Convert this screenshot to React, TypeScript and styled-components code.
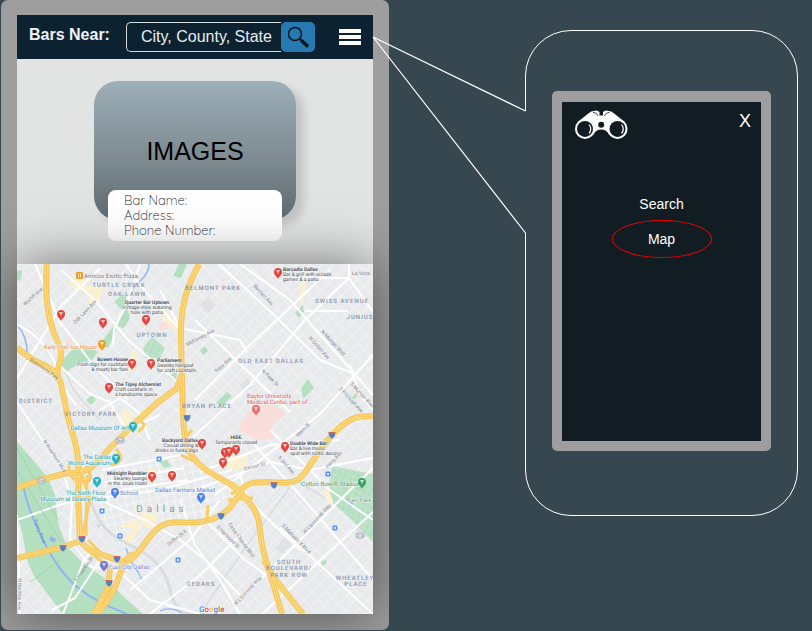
import React from "react";
import styled, { createGlobalStyle } from "styled-components";

const GlobalStyle = createGlobalStyle`
  * { box-sizing: border-box; }
  body {
    margin: 0;
    background: #37474f;
    font-family: "Liberation Sans", Arial, sans-serif;
  }
`;

const Page = styled.main`
  display: grid;
  grid-template-columns: 388fr 136fr 273fr;
  align-items: start;
  padding: 0 14px 0 1px;
`;

/* ---------- main phone ---------- */

const Phone = styled.section`
  display: flex;
  flex-direction: column;
  padding: 15px 16px 16px;
  border-radius: 7px;
  background: #9e9e9e;
  overflow: hidden;
`;

const TopBar = styled.header`
  display: flex;
  align-items: center;
  height: 44px;
  padding: 0 12px;
  background: #0c2231;
`;

const Title = styled.label`
  margin-right: 16px;
  padding-bottom: 4px;
  color: #f1f3f4;
  font-size: 16px;
  font-weight: 700;
  white-space: nowrap;
`;

const SearchBox = styled.form`
  display: flex;
  flex: 1;
  min-width: 0;
  height: 30px;
  margin-right: 24px;
`;

const SearchInput = styled.input`
  flex: 1;
  min-width: 0;
  padding: 0 0 0 14px;
  border: 1px solid #d6dbde;
  border-right: 0;
  border-radius: 5px 0 0 5px;
  background: transparent;
  color: #e8ecee;
  font: 16px "Liberation Sans", Arial, sans-serif;
  outline: 0;
`;

const SearchButton = styled.button`
  display: grid;
  place-items: center;
  width: 34px;
  padding: 0;
  border: 0;
  border-radius: 5px;
  background: #2779b1;
`;

const MenuButton = styled.button`
  display: flex;
  flex-direction: column;
  gap: 2px;
  width: 22px;
  padding: 0;
  border: 0;
  background: transparent;
`;

const Bar = styled.span`
  width: 100%;
  height: 4px;
  background: #fff;
`;

const Body = styled.div`
  display: flex;
  flex-direction: column;
  align-items: center;
  padding: 22px 0 23px;
  background: #e1e4e3;
`;

const Photo = styled.div`
  width: 202px;
  height: 139px;
  padding-top: 55px;
  border-radius: 24px;
  background: linear-gradient(#9dafb8, #7b888e 60%, #5f6a6f);
  box-shadow: 8px 6px 10px rgba(0, 0, 0, 0.14);
  color: #000;
  font-size: 25px;
  line-height: 30px;
  text-align: center;
`;

const Info = styled.div`
  width: 174px;
  margin-top: -30px;
  padding: 3px 16px;
  border-radius: 8px;
  background: #fff;
  color: #20242b;
  font-family: Quicksand, Lato, sans-serif;
  font-size: 13px;
  font-weight: 300;
  line-height: 15px;
`;

const MapPanel = styled.div`
  position: relative;
  line-height: 0;
  box-shadow: 0 0 50px rgba(0, 0, 0, 0.5);
`;

const MapSvg = styled.svg`
  display: block;
  width: 100%;
  height: auto;
  font-family: Roboto, sans-serif;
  text-rendering: geometricPrecision;
`;

/* ---------- callout ---------- */

const Callout = styled.aside`
  position: relative;
  grid-column: 3;
  margin-top: 30px;
  padding: 60px 26px 64px;
  border: 1px solid #fff;
  border-radius: 46px;
`;

const Tail = styled.svg`
  position: absolute;
  top: 5px;
  right: 100%;
  width: 154px;
  height: 200px;
`;

const MiniPhone = styled.div`
  padding: 11px 10px 10px;
  border-radius: 5px;
  background: #9e9e9e;
`;

const MiniScreen = styled.div`
  min-height: 339px;
  background: #111d23;
`;

const MiniTop = styled.div`
  display: flex;
  justify-content: space-between;
  align-items: flex-start;
  padding: 8px 10px 0 13px;
`;

const CloseButton = styled.button`
  padding: 0;
  border: 0;
  background: transparent;
  color: #fff;
  font: 18px/22px "Liberation Sans", Arial, sans-serif;
`;

const Menu = styled.nav`
  display: flex;
  flex-direction: column;
  align-items: center;
  margin-top: 51px;
`;

const MenuLink = styled.a<{ $active?: boolean }>`
  width: 100px;
  border: ${(p) => (p.$active ? "1px solid #f00000" : "0")};
  border-radius: 50%;
  color: #fff;
  font-size: 14px;
  line-height: ${(p) => (p.$active ? "36px" : "26px")};
  text-align: center;
  text-decoration: none;
  margin-bottom: 3px;
`;

/* ---------- icons ---------- */

const Magnifier = () => (
  <svg width="22" height="22" viewBox="0 0 22 22">
    <circle cx="8" cy="8" r="6.500" fill="none" stroke="#0b161d" strokeWidth="1.500" />
    <path d="M12.800 12.800 15 15" stroke="#0b161d" strokeWidth="2" />
    <path d="M15 15 20 19.600" stroke="#0b161d" strokeWidth="3.500" strokeLinecap="round" />
  </svg>
);

const Binoculars = () => (
  <svg width="53" height="30" viewBox="0 0 53 30">
    <g fill="#fff">
      <circle cx="10" cy="18.900" r="10" />
      <circle cx="42.500" cy="18.900" r="10" />
      <path d="M3 11.800 14 3Q16 1 19 1Q22-.5 24.500 2V5.500H28V2Q30.500-.5 33.500 1Q36.500 1 38.500 3L49.500 11.800 42 26 34 24.500Q31.500 19.500 26.200 19.500T18.500 24.500L10 26Z" />
    </g>
    <path d="M18 2.300Q22 2.500 23.200 6M34.500 2.300Q30.500 2.500 29.300 6" fill="none" stroke="#111d23" strokeWidth=".8" />
    <circle cx="26.200" cy="14.800" r="3" fill="#111d23" />
    <circle cx="10" cy="18.900" r="8" fill="#111d23" />
    <circle cx="42.500" cy="18.900" r="8" fill="#111d23" />
    <path d="M14 14.500Q17.500 19 14 23.500M46.500 14.500Q50 19 46.500 23.500" fill="none" stroke="#fff" strokeWidth="1.200" />
  </svg>
);

/* ---------- map ---------- */

const GREENS = [
  "M17 442L33 460L48 478L55 495L58 523L67 547L83 563L107 580L127 600L143 614H63L46 592L34 576L27 560L22 532L17 515Z",
  "M114 302L124 293L130 306L122 310Z",
  "M127 306L130 318L124 328L114 326L122 316Z",
  "M118 326L108 348L100 344L112 328Z",
  "M143 348L152 337L165 348L160 358L146 358Z",
  "M58 364L72 350L88 346L98 352L92 360L78 364L66 372Z",
  "M179 264H187L181 278L173 276Z",
  "M17 271L22 270L21 279L17 281Z",
  "M295 313L303 305L304 312L299 318Z",
  "M200 350L205 346L208 351L203 355Z",
  "M86 400L92 395L96 400L91 405Z",
  "M168 377L177 370L176 381Z",
  "M216 403L227 392L232 396L222 406Z",
  "M301 388L308 379L314 388L303 399Z",
  "M352 397L358 392L357 397L353 400Z",
  "M332 466L373 474V542L352 520L334 504L329 490Z",
  "M321 562L327 559L326 564L322 566Z",
  "M159 462L167 460L171 466L165 468Z",
  "M97 525L100 524L99 529Z",
];

const YELLOW_AREAS = [
  "M68 281L82 275L86 285L104 287L99 305L87 302L89 292L74 290Z",
  "M160 303L174 320L176 332L164 321Z",
  "M132 352L138 350L137 370L128 372Z",
  "M122 410L132 412L133 432L126 438L120 420Z",
  "M119 527L136 518L140 528L130 545L124 541L133 527Z",
  "M140 512L158 514L155 529L142 526Z",
  "M225 458L248 454L246 468L228 470Z",
  "M303 268L306 268L306 290L302 304L299 296Z",
  "M148 468L156 470L154 484L146 480Z",
  "M323 490L337 490L336 500L328 504Z",
];

const WHITE_ROADS = [
  "M17 325Q30 330 42 343T58 372T76 405",
  "M35 264L60 322L94 366L128 400",
  "M61 270L95 300L128 340L180 384",
  "M17 378L62 305L100 268",
  "M126 264L140 285L180 330",
  "M140 264L128 300L114 330L113 345",
  "M160 290L180 328L240 340L247 352",
  "M17 402L62 470L72 500",
  "M60 366L90 394L110 402L126 430L160 415",
  "M100 410L120 398L138 412L150 440",
  "M219 264L275 316L320 360L352 373L354 378",
  "M240 264L290 300L373 395",
  "M195 320L232 356L290 412",
  "M195 400L253 342L330 270",
  "M190 440L250 385L305 320",
  "M215 495L320 414L373 355",
  "M349 264V278L373 312M349 278L305 320",
  "M305 278H349M305 311H348",
  "M200 472L270 445L340 440",
  "M190 492L270 462L310 470L373 458",
  "M250 440L300 495L373 580",
  "M270 430L330 490L373 520",
  "M240 600L340 500L373 468",
  "M262 614L373 512",
  "M280 528L373 614",
  "M350 365L360 395L373 410",
  "M17 520L62 504L100 498L160 490L232 470",
  "M72 500L70 540L90 566L120 572L150 600L200 614",
  "M100 500L145 520L180 540L206 560L240 595",
  "M63 614L84 560L96 546M52 610L75 598L100 560",
  "M17 515L20 614",
  "M180 500L195 545L220 580L240 614",
  "M205 520L245 560L266 575",
  "M130 590L190 540L220 500",
  "M240 475L248 500L300 550",
  "M150 614L200 575L240 535",
  "M102 470L180 455M105 482L184 468M108 492L188 480",
];

const HIGHWAYS = [
  "M47 264C45 290 47 320 57 340S55 365 58 375",
  "M17 348L33 360C50 368 57 370 61 384L68 418L75 442C80 462 79 480 78 495L80 540C85 550 100 554 117 560S138 550 153 533S180 525 200 522S230 512 240 492S288 490 300 478S318 448 336 431S360 417 373 416",
  "M17 558L63 547L80 541",
  "M17 488L40 480L67 473C90 474 94 466 110 448L133 425L157 403L177 388L181 376",
  "M199 264C185 290 180 310 181 340L183 415C184 448 190 455 200 465S232 482 240 492S258 507 260 530S268 565 282 614",
  "M264 560C270 575 280 585 303 614",
  "M134 554C117 560 126 582 97 614",
  "M110 568L108 588L94 614",
];

const RAMPS = [
  "M87 475L86 536M82 475L90 500L82 536",
  "M69 464Q68 480 82 482T86 466",
  "M116 449Q128 462 110 465",
  "M138 432Q148 424 141 422",
  "M231 494L250 482M232 482L250 500M228 500L253 498",
  "M85 548L112 570M88 540L104 556",
  "M208 505L207 520M184 440L192 430M181 455L196 462",
];

type Label = { x: number; y: number; text: string; rotate?: number };

const DISTRICTS: Label[] = [
  { x: 119, y: 287, text: "TURTLE CREEK" },
  { x: 127, y: 296, text: "OAK LAWN" },
  { x: 213, y: 290, text: "BELMONT PARK" },
  { x: 342, y: 303, text: "SWISS AVENUE" },
  { x: 360, y: 319, text: "JUNIUS" },
  { x: 152, y: 337, text: "UPTOWN" },
  { x: 271, y: 363, text: "OLD EAST DALLAS" },
  { x: 36, y: 403, text: "DISTRICT" },
  { x: 91, y: 416, text: "VICTORY PARK" },
  { x: 207, y: 408, text: "BRYAN PLACE" },
  { x: 201, y: 586, text: "CEDARS" },
  { x: 289, y: 564, text: "SOUTH" },
  { x: 289, y: 570, text: "BOULEVARD/" },
  { x: 289, y: 577, text: "PARK ROW" },
  { x: 355, y: 580, text: "WHEATLEY" },
  { x: 356, y: 586, text: "PLACE" },
];

const STREETS: Label[] = [
  { x: 34, y: 298, text: "Wycliff Ave", rotate: -42 },
  { x: 86, y: 313, text: "Oak Lawn Ave", rotate: -46 },
  { x: 262, y: 296, text: "Bennett Ave", rotate: 47 },
  { x: 332, y: 344, text: "N Munger Blvd", rotate: 47 },
  { x: 318, y: 349, text: "N Collett Ave", rotate: 48 },
  { x: 201, y: 339, text: "McKinney Ave", rotate: -28 },
  { x: 224, y: 366, text: "Ross Ave", rotate: -42 },
  { x: 269, y: 379, text: "N Peak St", rotate: 45 },
  { x: 43, y: 370, text: "Stemmons Fwy", rotate: 35 },
  { x: 53, y: 457, text: "N Riverfront Blvd", rotate: 57 },
  { x: 304, y: 431, text: "Main St", rotate: -45 },
  { x: 350, y: 401, text: "S Fitzhugh Ave", rotate: 47 },
  { x: 361, y: 396, text: "S Munger Blvd", rotate: 48 },
  { x: 255, y: 468, text: "Canton St", rotate: -14 },
  { x: 285, y: 466, text: "S 2nd Ave", rotate: 48 },
  { x: 335, y: 461, text: "Perry Ave", rotate: -48 },
  { x: 85, y: 570, text: "S Houston St", rotate: -55 },
  { x: 240, y: 541, text: "Cesar Chavez Blvd", rotate: 54 },
  { x: 227, y: 538, text: "S Harwood St", rotate: 45 },
  { x: 295, y: 540, text: "S Malcolm X Blvd", rotate: 46 },
  { x: 318, y: 520, text: "Al Lipscomb Way", rotate: -47 },
  { x: 249, y: 592, text: "Al Lipscomb Way", rotate: -46 },
  { x: 178, y: 539, text: "Griffin St E", rotate: -38 },
  { x: 18, y: 594, text: "N Beckley Ave", rotate: 90 },
  { x: 361, y: 275, text: "La Vista" },
];

type Place = {
  x: number;
  y: number;
  color: string;
  anchor: "start" | "middle" | "end";
  lines: string[];
  bold?: boolean;
};

const PLACES: Place[] = [
  { x: 84, y: 278, color: "#80766e", anchor: "start", lines: ["Amicos Exotic Pizza"] },
  { x: 283, y: 271, color: "#4c4f53", anchor: "start", bold: true, lines: ["Barcadia Dallas", "Bar & grill with arcade", "games & a patio"] },
  { x: 147, y: 304, color: "#4c4f53", anchor: "middle", bold: true, lines: ["Quarter Bar Uptown", "Vintage-style watering", "hole with patio"] },
  { x: 97, y: 349, color: "#e8963d", anchor: "end", lines: ["Katy Trail Ice House"] },
  { x: 128, y: 361, color: "#4c4f53", anchor: "end", bold: true, lines: ["Bowen House", "Posh digs for cocktails", "& meaty bar fare"] },
  { x: 157, y: 362, color: "#4c4f53", anchor: "start", bold: true, lines: ["Parliament", "Swanky hangout", "for craft cocktails"] },
  { x: 115, y: 386, color: "#4c4f53", anchor: "start", bold: true, lines: ["The Tipsy Alchemist", "Craft cocktails in", "a handsome space"] },
  { x: 129, y: 430, color: "#20a5b5", anchor: "end", lines: ["Dallas Museum Of Art"] },
  { x: 111, y: 459, color: "#20a5b5", anchor: "end", lines: ["The Dallas", "World Aquarium"] },
  { x: 106, y: 495, color: "#2a9ca8", anchor: "end", lines: ["The Sixth Floor", "Museum at Dealey Plaza"] },
  { x: 247, y: 398, color: "#e5605b", anchor: "start", lines: ["Baylor University", "Medical Center, part of..."] },
  { x: 198, y: 442, color: "#4c4f53", anchor: "end", bold: true, lines: ["Backyard Dallas", "Casual dining &", "drinks in funky digs"] },
  { x: 236, y: 439, color: "#4c4f53", anchor: "middle", bold: true, lines: ["HIDE", "Temporarily closed"] },
  { x: 290, y: 445, color: "#4c4f53", anchor: "start", bold: true, lines: ["Double Wide Bar", "Bar & live music", "spot with rustic decor"] },
  { x: 147, y: 475, color: "#4c4f53", anchor: "end", bold: true, lines: ["Midnight Rambler", "Swanky lounge", "in the Joule Hotel"] },
  { x: 155, y: 492, color: "#5482dc", anchor: "start", lines: ["Dallas Farmers Market"] },
  { x: 120, y: 495, color: "#6b8bd0", anchor: "start", lines: ["School"] },
  { x: 109, y: 569, color: "#7f83cf", anchor: "start", lines: ["Fuel City Dallas"] },
  { x: 301, y: 486, color: "#3b9b5e", anchor: "start", lines: ["Cotton Bowl® Stadium"] },
  { x: 348, y: 502, color: "#5aa674", anchor: "start", lines: ["Fair Park"] },
];

const RED = "#e5433c";
const PINS: [number, number, string][] = [
  [61, 315, RED], [103, 323, RED], [146, 320, RED], [278, 273, RED],
  [132, 364, RED], [151, 364, RED], [109, 388, RED], [202, 444, RED],
  [225, 453, RED], [229, 452, RED], [236, 450, RED], [223, 463, RED],
  [285, 447, RED], [152, 477, RED], [172, 476, RED], [256, 410, "#e8706c"],
  [102, 345, "#f39c1f"], [133, 427, "#22b3c4"], [116, 459, "#22b3c4"],
  [97, 482, "#22b3c4"], [115, 493, "#4a80ea"], [201, 498, "#4a80ea"],
  [104, 566, "#7276cf"], [362, 483, "#34a262"],
];

const SHIELDS: [number, number][] = [
  [187, 418], [332, 435], [274, 485], [82, 539], [63, 548], [117, 559], [109, 583], [221, 516],
];
const ROUTES: [number, number, string][] = [[120, 441, "366"], [41, 481, "356"], [360, 536, "310"]];
const STATIONS: [number, number][] = [[159, 459], [102, 511], [120, 536], [178, 560], [328, 474], [335, 528]];

const DallasMap = () => (
  <MapSvg viewBox="17 264 356 350" role="img" aria-label="Map of bars in Dallas">
    <defs>
      <pattern id="blocks" width="9" height="11" patternUnits="userSpaceOnUse" patternTransform="rotate(45)">
        <path d="M0 0H9M0 0V11" stroke="#f8f9fa" strokeWidth="1" />
      </pattern>
      <pattern id="downtown" width="8" height="8" patternUnits="userSpaceOnUse" patternTransform="rotate(-14)">
        <path d="M0 0H8M0 0V8" stroke="#fff" strokeWidth="1.200" />
      </pattern>
      <pattern id="paths" width="6" height="6" patternUnits="userSpaceOnUse" patternTransform="rotate(25)">
        <path d="M0 0H6M0 0V6" stroke="#d8eedf" strokeWidth=".7" />
      </pattern>
    </defs>
    <rect x="17" y="264" width="356" height="350" fill="#e8eaec" />
    <rect x="17" y="264" width="356" height="350" fill="url(#blocks)" />
    <path d="M92 474L184 448L238 488L200 520L100 535Z" fill="#e8eaec" />
    <path d="M92 474L184 448L238 488L200 520L100 535Z" fill="url(#downtown)" />
    <path d="M200 305L208 297L216 305L208 313ZM240 384L248 378L252 388L244 392ZM275 548L290 532L297 538L282 554ZM354 528L362 521L370 530L364 538Z" fill="#dfe1e7" />
    <path d="M239 424L252 408L270 400L286 414L272 426L274 438L256 440L242 432ZM158 324L167 322L168 329L160 330ZM66 340L72 336L71 345L65 346Z" fill="#f9dedc" />
    {YELLOW_AREAS.map((d) => <path key={d} d={d} fill="#fbf1d1" />)}
    {GREENS.map((d) => <path key={d} d={d} fill="#b5dfc1" />)}
    <path d="M332 466L373 474V542L352 520L334 504L329 490ZM143 348L152 337L165 348L160 358L146 358Z" fill="url(#paths)" />
    <g fill="none" stroke="#8fb6f3">
      <path d="M23 484Q27 508 43 540T77 587T127 614" strokeWidth="2" />
      <path d="M149 264Q149 273 141 280T131 292M17 325Q29 338 27 360" strokeWidth="1.500" />
      <path d="M126 548Q132 566 138 572L142 580M160 611Q170 606 182 613" strokeWidth="1.300" />
      <path d="M347 499L352 505M50 538L55 541" strokeWidth="4" />
    </g>
    <g fill="none" stroke="#d9dbde" strokeWidth="3">
      <path d="M90 496Q96 530 130 545T170 590T205 614" />
      <path d="M62 366L75 392L100 420M200 614L245 548L295 480L325 498" strokeWidth="1.500" />
    </g>
    <g fill="none" stroke="#fff" strokeWidth="2" strokeLinejoin="round">
      {WHITE_ROADS.map((d) => <path key={d} d={d} />)}
    </g>
    <path d="M17 448L58 520M17 470L61 542M30 582L60 560" fill="none" stroke="#9fd3ae" strokeWidth="1" />
    <g fill="none" strokeLinejoin="round">
      {HIGHWAYS.map((d) => <path key={d} d={d} stroke="#f7c95c" strokeWidth="6" />)}
      {RAMPS.map((d) => <path key={d} d={d} stroke="#f8cd66" strokeWidth="3" />)}
      {HIGHWAYS.map((d) => <path key={d} d={d} stroke="#fcdc88" strokeWidth="3" />)}
      {HIGHWAYS.map((d) => <path key={d} d={d} stroke="#f5c352" strokeWidth="1" />)}
    </g>
    <g fill="#85898e" fontSize="5" textAnchor="middle">
      {STREETS.map((s) => (
        <text key={`${s.x}-${s.y}`} x={s.x} y={s.y} transform={`rotate(${s.rotate ?? 0} ${s.x} ${s.y})`}>{s.text}</text>
      ))}
      <text x="38" y="532" fill="#5b86cf" transform="rotate(67 38 532)">Trinity River</text>
    </g>
    <g fill="#8795ac" fontSize="6" fontWeight="500" textAnchor="middle" letterSpacing="1">
      {DISTRICTS.map((d) => <text key={d.text} x={d.x} y={d.y}>{d.text}</text>)}
    </g>
    <text x="162" y="512" fill="#94979c" fontSize="10" letterSpacing="4" textAnchor="middle">Dallas</text>
    {SHIELDS.map(([x, y]) => (
      <g key={`${x}-${y}`}>
        <path d={`M${x - 3.5} ${y - 3}H${x + 3.5}Q${x + 4} ${y + 2} ${x} ${y + 4}Q${x - 4} ${y + 2} ${x - 3.5} ${y - 3}Z`} fill="#5b7fb8" stroke="#dce3ee" strokeWidth=".5" />
        <path d={`M${x - 3.5} ${y - 2.5}H${x + 3.5}`} stroke="#ce6d6d" />
      </g>
    ))}
    {ROUTES.map(([x, y, n]) => (
      <g key={n}>
        <rect x={x - 4} y={y - 3} width="8" height="5" rx="2" fill="#f5f5f5" stroke="#8c8f92" strokeWidth=".7" />
        <text x={x} y={y + 1} fontSize="4" fill="#6e7276" textAnchor="middle">{n}</text>
      </g>
    ))}
    {STATIONS.map(([x, y]) => (
      <g key={`${x}-${y}`}>
        <rect x={x - 2.5} y={y - 2.5} width="5" height="5" rx="1" fill="#5a95ee" />
        <path d={`M${x - 1} ${y - 1}H${x + 1}V${y + 1}H${x - 1}Z`} fill="#dce9fd" />
      </g>
    ))}
    {PLACES.map((p) => (
      <text key={p.lines[0]} textAnchor={p.anchor} fill={p.color} fontSize="6" stroke="#f4f5f6" strokeWidth="1" paintOrder="stroke">
        {p.lines.map((line, i) => (
          <tspan
            key={line}
            x={p.x}
            y={p.y + i * (p.bold ? 5 : 6)}
            fontSize={p.bold ? 5 : 6}
            fontWeight={p.bold && i === 0 ? 700 : 400}
          >
            {line}
          </tspan>
        ))}
      </text>
    ))}
    <rect x="76" y="272" width="7" height="7" rx="1" fill="#f29a22" />
    <path d="M78.500 273.500V277.500M80.500 273.500V277.500" stroke="#fff" strokeWidth=".8" />
    {PINS.map(([x, y, color]) => (
      <g key={`${x}-${y}`} transform={`translate(${x} ${y})`}>
        <path d="M0 6C-1 3 -4 2.500 -4 -1A4 4 0 0 1 4 -1C4 2.500 1 3 0 6Z" fill={color} />
        <path d="M-1.800 -2.500H1.800L0 -.5ZM0 -1V1.500" fill="#fff" fillOpacity=".8" stroke="#fff" strokeOpacity=".8" strokeWidth=".5" />
      </g>
    ))}
    <text x="199" y="612" fontSize="8" fontWeight="500" stroke="#fff" strokeWidth="1" paintOrder="stroke">
      <tspan fill="#4285f4">G</tspan><tspan fill="#ea4335">o</tspan><tspan fill="#fbbc05">o</tspan><tspan fill="#4285f4">g</tspan><tspan fill="#34a853">l</tspan><tspan fill="#ea4335">e</tspan>
    </text>
  </MapSvg>
);

export default function App() {
  return (
    <>
      <GlobalStyle />
      <Page>
        <Phone>
          <TopBar>
            <Title htmlFor="place">Bars Near:</Title>
            <SearchBox onSubmit={(e) => e.preventDefault()}>
              <SearchInput id="place" defaultValue="City, County, State" />
              <SearchButton type="submit" aria-label="Search"><Magnifier /></SearchButton>
            </SearchBox>
            <MenuButton type="button" aria-label="Open menu"><Bar /><Bar /><Bar /></MenuButton>
          </TopBar>
          <Body>
            <Photo>IMAGES</Photo>
            <Info>
              <div>Bar Name:</div>
              <div>Address:</div>
              <div>Phone Number:</div>
            </Info>
          </Body>
          <MapPanel><DallasMap /></MapPanel>
        </Phone>
        <Callout>
          <Tail viewBox="0 0 154 200" aria-hidden="true">
            <path d="M153.500 75V197" stroke="#37474f" strokeWidth="2" />
            <path d="M153.500 75L1 1L153.500 197" fill="none" stroke="#fff" strokeWidth="1.200" />
          </Tail>
          <MiniPhone>
            <MiniScreen>
              <MiniTop>
                <Binoculars />
                <CloseButton type="button" aria-label="Close menu">X</CloseButton>
              </MiniTop>
              <Menu>
                <MenuLink href="#search">Search</MenuLink>
                <MenuLink href="#map" $active>Map</MenuLink>
              </Menu>
            </MiniScreen>
          </MiniPhone>
        </Callout>
      </Page>
    </>
  );
}
